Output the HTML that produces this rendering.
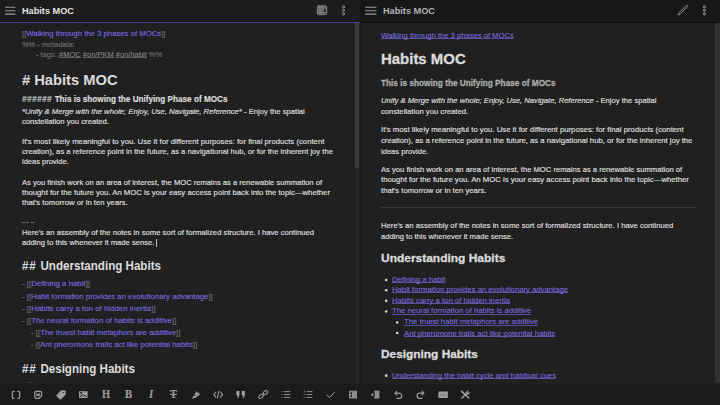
<!DOCTYPE html>
<html><head><meta charset="utf-8">
<style>
*{margin:0;padding:0;box-sizing:border-box}
html,body{width:720px;height:405px;overflow:hidden;background:#202020}
body{position:relative;font-family:"Liberation Sans",sans-serif;color:#dadada}
.pane{position:absolute;top:0;height:405px;overflow:hidden}
#lp{left:0;width:360px;background:#202020}
#rp{left:360px;width:360px;background:#202020}
.hdr{position:absolute;left:0;top:0;height:22px;background:#191919}
.ln{position:absolute;white-space:pre;line-height:0;transform-origin:0 0}
.ln span{line-height:0}
.b{font-weight:bold}
.i{font-style:italic}
.f{color:#6a6a6a}
.a{color:#7f6ce2;-webkit-text-stroke:0.1px currentColor}
.au{-webkit-text-stroke:0.05px currentColor;color:#8170e4;background:linear-gradient(#6f5fd0,#6f5fd0) 0 calc(100% - 0.9px)/100% 0.75px no-repeat}
.tg{color:#858585;-webkit-text-stroke:0.1px currentColor;background:linear-gradient(#7a7a7a,#7a7a7a) 0 calc(100% - 0.8px)/100% 0.7px no-repeat}
.m{color:#ababab}
.hh{font-style:italic;color:#b8b8b8;letter-spacing:0.45px}
.ln{-webkit-text-stroke:0.2px currentColor}
.hd{-webkit-text-stroke:0.3px currentColor}
.hw{letter-spacing:0.8px}
.ns{-webkit-text-stroke:0.05px currentColor}
.bul{position:absolute;width:2.6px;height:2.6px;border-radius:50%;background:#d8d8d8}
svg{position:absolute;overflow:visible}
#tb{position:absolute;left:0;top:384px;width:720px;height:21px;background:#1b1b1b}
</style></head><body>
<div id="lp" class="pane">
 <div class="hdr" style="width:360px;background:#1c1c1d"></div>
 <div style="position:absolute;left:0;top:20.6px;width:360px;height:1px;background:#151515"></div>
 <div style="position:absolute;left:0;top:21.6px;width:360px;height:1.2px;background:#4d409f"></div>
 <div style="position:absolute;left:355px;top:23px;width:4px;height:362px;background:#262626"></div>
 <div style="position:absolute;left:355px;top:23px;width:4px;height:145px;background:#3a3a3a"></div>
</div>
<div id="rp" class="pane">
 <div class="hdr" style="width:360px;background:#171717"></div>
 <div style="position:absolute;left:0;top:21.6px;width:360px;height:1px;background:#0f0f0f"></div>
 <div style="position:absolute;left:-1px;top:22px;width:2px;height:362px;background:#1b1b1b"></div>
 <div style="position:absolute;left:354.8px;top:22.6px;width:5.2px;height:360.6px;background:#313131;border-radius:2px 0 0 2px"></div>
</div>
<!-- header contents -->
<svg width="720" height="22" style="left:0;top:0" viewBox="0 0 720 22" fill="none" stroke-linecap="round">
 <g stroke="#9a9a9a" stroke-width="1.1">
  <path d="M5.5 7.3H15M5.5 10.7H15M5.5 14.1H15"/>
  <path d="M365.5 7.3H376M365.5 10.7H376M365.5 14.1H376"/>
 </g>
 <g stroke="#9a9a9a" stroke-width="1">
  <rect x="317.3" y="5.8" width="9.4" height="8.8" rx="1.4" fill="#5f5f5f" stroke="#8c8c8c" stroke-width="0.9"/>
  <path d="M319.1 7.8H323.6M319.1 10.2H322.6M319.1 12.6H323.6" stroke="#9a9a9a" stroke-width="0.8"/>
  <path d="M325.6 8.7L323.3 10.4L325.6 12.1Z" fill="#1a1a1a" stroke="none"/>
  <circle cx="343.5" cy="6.9" r="1.05"/><circle cx="343.5" cy="10.4" r="1.05"/><circle cx="343.5" cy="13.9" r="1.05"/>
  <circle cx="704.4" cy="6.9" r="1.05"/><circle cx="704.4" cy="10.4" r="1.05"/><circle cx="704.4" cy="13.9" r="1.05"/>
  <path d="M678.4 14.6L678.9 12.8L686.4 5.5A0.85 0.85 0 0 1 687.6 6.7L680.2 14.1Z" stroke-width="0.9" stroke-linejoin="round"/>
 </g>
</svg>
<div class="ln b" style="left:22px;top:11.2px;font-size:9.6px;color:#e2e2e2;-webkit-text-stroke:0;transform:scaleX(0.955)"><span>Habits MOC</span></div>
<div class="ln b" style="left:382.5px;top:11.2px;font-size:9.6px;color:#b3b3b3;-webkit-text-stroke:0;transform:scaleX(0.955)"><span>Habits MOC</span></div>
<!-- hr right -->
<div style="position:absolute;left:380.4px;top:207.3px;width:315.6px;height:1px;background:#363636"></div>
<div style="position:absolute;left:21.9px;top:221.7px;width:3.2px;height:1.1px;background:#727272"></div><div style="position:absolute;left:26.4px;top:221.7px;width:3px;height:1.1px;background:#727272"></div><div style="position:absolute;left:30.8px;top:221.7px;width:3.3px;height:1.1px;background:#727272"></div>
<!-- cursor -->
<div style="position:absolute;left:156.4px;top:238.6px;width:0.7px;height:8px;background:#bdbdbd"></div>
<div style="position:absolute;left:27.8px;top:382px;width:1px;height:1px;background:#555"></div><div style="position:absolute;left:31.2px;top:382px;width:1px;height:1px;background:#555"></div>
<div class="ln " style="left:22px;top:34.33px;font-size:8px;transform:scaleX(0.9681);"><span id="l1"><span class="f">[[</span><span class="a">Walking through the 3 phases of MOCs</span><span class="f">]]</span></span></div>
<div class="ln " style="left:22px;top:44.73px;font-size:8px;transform:scaleX(0.9311);"><span id="l2"><span class="f">%% - metadata:</span></span></div>
<div class="ln " style="left:35.8px;top:54.73px;font-size:8px;transform:scaleX(0.9395);"><span id="l3"><span class="f">- tags: </span><span class="tg">#MOC</span><span class="f"> </span><span class="tg">#on/PKM</span><span class="f"> </span><span class="tg">#on/habit</span><span class="f"> %%</span></span></div>
<div class="ln b ns" style="left:22px;top:79.81px;font-size:14.4px;transform:scaleX(1.0207);"><span id="l4"># Habits MOC</span></div>
<div class="ln b" style="left:22px;top:99.42px;font-size:8.3px;transform:scaleX(0.9842);"><span id="l5"><span class="hh">###### </span>This is showing the Unifying Phase of MOCs</span></div>
<div class="ln " style="left:22px;top:111.93px;font-size:8px;transform:scaleX(0.9568);"><span id="l6"><span class="i">*Unify &amp; Merge with the whole; Enjoy, Use, Navigate, Reference*</span> - Enjoy the spatial</span></div>
<div class="ln " style="left:22px;top:121.93px;font-size:8px;transform:scaleX(0.9588);"><span id="l7">constellation you created.</span></div>
<div class="ln " style="left:22px;top:142.23px;font-size:8px;transform:scaleX(0.9686);"><span id="l8">It's most likely meaningful to you. Use it for different purposes: for final products (content</span></div>
<div class="ln " style="left:22px;top:152.33px;font-size:8px;transform:scaleX(0.9593);"><span id="l9">creation), as a reference point in the future, as a navigational hub, or for the inherent joy the</span></div>
<div class="ln " style="left:22px;top:162.23px;font-size:8px;transform:scaleX(0.9375);"><span id="l10">ideas provide.</span></div>
<div class="ln " style="left:22px;top:182.73px;font-size:8px;transform:scaleX(0.9489);"><span id="l11">As you finish work on an area of interest, the MOC remains as a renewable summation of</span></div>
<div class="ln " style="left:22px;top:193.13px;font-size:8px;transform:scaleX(0.9660);"><span id="l12">thought for the future you. An MOC is your easy access point back into the topic—whether</span></div>
<div class="ln " style="left:22px;top:203.03px;font-size:8px;transform:scaleX(0.9655);"><span id="l13">that's tomorrow or in ten years.</span></div>
<div class="ln " style="left:22px;top:232.53px;font-size:8px;transform:scaleX(0.9594);"><span id="l15">Here's an assembly of the notes in some sort of formalized structure. I have continued</span></div>
<div class="ln " style="left:22px;top:242.83px;font-size:8px;transform:scaleX(0.9542);"><span id="l16">adding to this whenever it made sense.</span></div>
<div class="ln b ns" style="left:22px;top:266.24px;font-size:12px;transform:scaleX(0.9667);"><span id="l17"><span class="hw">## </span>Understanding Habits</span></div>
<div class="ln " style="left:22px;top:284.33px;font-size:8px;transform:scaleX(0.9800);"><span id="l18"><span class="f">- </span><span class="f">[[</span><span class="a">Defining a habit</span><span class="f">]]</span></span></div>
<div class="ln " style="left:22px;top:296.73px;font-size:8px;transform:scaleX(0.9701);"><span id="l19"><span class="f">- </span><span class="f">[[</span><span class="a">Habit formation provides an evolutionary advantage</span><span class="f">]]</span></span></div>
<div class="ln " style="left:22px;top:309.03px;font-size:8px;transform:scaleX(0.9850);"><span id="l20"><span class="f">- </span><span class="f">[[</span><span class="a">Habits carry a ton of hidden inertia</span><span class="f">]]</span></span></div>
<div class="ln " style="left:22px;top:321.23px;font-size:8px;transform:scaleX(0.9774);"><span id="l21"><span class="f">- </span><span class="f">[[</span><span class="a">The neural formation of habits is additive</span><span class="f">]]</span></span></div>
<div class="ln " style="left:30.6px;top:333.13px;font-size:8px;transform:scaleX(0.9766);"><span id="l22"><span class="f">- </span><span class="f">[[</span><span class="a">The truest habit metaphors are additive</span><span class="f">]]</span></span></div>
<div class="ln " style="left:30.6px;top:345.33px;font-size:8px;transform:scaleX(0.9743);"><span id="l23"><span class="f">- </span><span class="f">[[</span><span class="a">Ant pheromone trails act like potential habits</span><span class="f">]]</span></span></div>
<div class="ln b ns" style="left:22px;top:369.34px;font-size:12px;transform:scaleX(0.9641);"><span id="l24"><span class="hw">## </span>Designing Habits</span></div>
<div class="ln " style="left:381px;top:35.93px;font-size:8px;transform:scaleX(0.9524);"><span id="r1"><span class="au">Walking through the 3 phases of MOCs</span></span></div>
<div class="ln b hd" style="left:381px;top:58.70px;font-size:15px;transform:scaleX(0.9963);"><span id="r2">Habits MOC</span></div>
<div class="ln b hd" style="left:381px;top:82.58px;font-size:9px;transform:scaleX(0.9164);"><span id="r3"><span class="m">This is showing the Unifying Phase of MOCs</span></span></div>
<div class="ln " style="left:381px;top:100.53px;font-size:8px;transform:scaleX(0.9519);"><span id="r4"><span class="i">Unify &amp; Merge with the whole; Enjoy, Use, Navigate, Reference</span> - Enjoy the spatial</span></div>
<div class="ln " style="left:381px;top:111.83px;font-size:8px;transform:scaleX(0.9599);"><span id="r5">constellation you created.</span></div>
<div class="ln " style="left:381px;top:130.03px;font-size:8px;transform:scaleX(0.9692);"><span id="r6">It's most likely meaningful to you. Use it for different purposes: for final products (content</span></div>
<div class="ln " style="left:381px;top:140.93px;font-size:8px;transform:scaleX(0.9605);"><span id="r7">creation), as a reference point in the future, as a navigational hub, or for the inherent joy the</span></div>
<div class="ln " style="left:381px;top:151.63px;font-size:8px;transform:scaleX(0.9476);"><span id="r8">ideas provide.</span></div>
<div class="ln " style="left:381px;top:169.73px;font-size:8px;transform:scaleX(0.9527);"><span id="r9">As you finish work on an area of interest, the MOC remains as a renewable summation of</span></div>
<div class="ln " style="left:381px;top:180.23px;font-size:8px;transform:scaleX(0.9657);"><span id="r10">thought for the future you. An MOC is your easy access point back into the topic—whether</span></div>
<div class="ln " style="left:381px;top:191.23px;font-size:8px;transform:scaleX(0.9619);"><span id="r11">that's tomorrow or in ten years.</span></div>
<div class="ln " style="left:381px;top:226.13px;font-size:8px;transform:scaleX(0.9604);"><span id="r12">Here's an assembly of the notes in some sort of formalized structure. I have continued</span></div>
<div class="ln " style="left:381px;top:236.63px;font-size:8px;transform:scaleX(0.9528);"><span id="r13">adding to this whenever it made sense.</span></div>
<div class="ln b hd" style="left:381px;top:258.32px;font-size:11.5px;transform:scaleX(1.0403);"><span id="r14">Understanding Habits</span></div>
<div class="ln " style="left:392.0px;top:279.93px;font-size:8px;transform:scaleX(0.9587);"><span id="rb0"><span class="au">Defining a habit</span></span></div>
<div class="ln " style="left:392.0px;top:290.13px;font-size:8px;transform:scaleX(0.9629);"><span id="rb1"><span class="au">Habit formation provides an evolutionary advantage</span></span></div>
<div class="ln " style="left:392.0px;top:300.73px;font-size:8px;transform:scaleX(0.9685);"><span id="rb2"><span class="au">Habits carry a ton of hidden inertia</span></span></div>
<div class="ln " style="left:392.0px;top:311.33px;font-size:8px;transform:scaleX(0.9648);"><span id="rb3"><span class="au">The neural formation of habits is additive</span></span></div>
<div class="ln " style="left:403.6px;top:322.33px;font-size:8px;transform:scaleX(0.9634);"><span id="rb4"><span class="au">The truest habit metaphors are additive</span></span></div>
<div class="ln " style="left:403.6px;top:333.53px;font-size:8px;transform:scaleX(0.9632);"><span id="rb5"><span class="au">Ant pheromone trails act like potential habits</span></span></div>
<div class="ln b hd" style="left:381px;top:354.32px;font-size:11.5px;transform:scaleX(1.0315);"><span id="r15">Designing Habits</span></div>
<div class="ln " style="left:392px;top:375.53px;font-size:8px;transform:scaleX(0.9628);"><span id="rb6"><span class="au">Understanding the habit cycle and habitual cues</span></span></div>
<svg width="720" height="405" style="left:0;top:0"><circle cx="386.2" cy="280.05" r="1.3" fill="#d6d6d6"/><circle cx="386.2" cy="290.25" r="1.3" fill="#d6d6d6"/><circle cx="386.2" cy="300.85" r="1.3" fill="#d6d6d6"/><circle cx="386.2" cy="311.45" r="1.3" fill="#d6d6d6"/><circle cx="397.2" cy="322.45" r="1.3" fill="#d6d6d6"/><circle cx="397.2" cy="333.05" r="1.3" fill="#d6d6d6"/><circle cx="386.2" cy="375.65" r="1.3" fill="#d6d6d6"/></svg>
<div id="tb"></div>
<svg width="720" height="21" style="left:0;top:384px" viewBox="0 384 720 21" fill="none" stroke="#9d9d9d" stroke-width="1.2" stroke-linecap="round" stroke-linejoin="round">
 <!-- [ ] -->
 <path d="M14.2 391.3H13.3A0.9 0.9 0 0 0 12.4 392.2V397.4A0.9 0.9 0 0 0 13.3 398.3H14.2M17.8 391.3H18.7A0.9 0.9 0 0 1 19.6 392.2V397.4A0.9 0.9 0 0 1 18.7 398.3H17.8" stroke-width="1.3"/>
 <!-- sticker -->
 <path d="M36 391.3H40.4A1.2 1.2 0 0 1 41.6 392.5V395.8L39 398.3H36A1.2 1.2 0 0 1 34.8 397.1V392.5A1.2 1.2 0 0 1 36 391.3Z" stroke-width="1.2"/>
 <path d="M36.6 393.2V395.8H39.6V393.2L38.1 394.6Z" fill="#9d9d9d" stroke-width="0.5"/>
 <!-- tag -->
 <path d="M61.2 390.8H65.2V394.8L60.2 399.5L56.8 396Z" fill="#9d9d9d" stroke-width="0.9"/><circle cx="63.4" cy="392.6" r="0.65" fill="#1b1b1b" stroke="none"/>
 <!-- image -->
 <rect x="79" y="391.2" width="8.6" height="6.8" fill="#9d9d9d" stroke="none"/>
 <path d="M80.2 396.8L82 394.6L83.6 396.4L85 395.3L86.6 396.8" stroke="#1b1b1b" stroke-width="0.9"/><rect x="80" y="392.2" width="2.4" height="1.3" fill="#1b1b1b" stroke="none"/>
 <!-- highlighter -->
 <path d="M192.2 398.5L196.3 390.9L197.3 392.6L198.6 392.3L200.1 394.4L196.6 397.3Z" fill="#8f8f8f" stroke="none"/>
 <path d="M192.2 398.5L194.6 394.2L196.4 396.6Z" fill="#b0b0b0" stroke="none"/>
 <circle cx="194.7" cy="395.6" r="0.75" fill="#1b1b1b" stroke="none"/>
 <!-- code -->
 <path d="M215.8 392.2L213.9 394.7L215.8 397.2M220.6 392.2L222.5 394.7L220.6 397.2M218.9 391.4L217.4 398" stroke-width="1.1"/>
 <!-- quote -->
 <path d="M236.4 390.9H239.4V395.2Q239.3 397.4 237.5 398.2L237.1 397.5Q238 396.8 238 395.4H236.4Z" fill="#a6a6a6" stroke="none"/>
 <path d="M241.8 390.9H244.8V395.2Q244.7 397.4 242.9 398.2L242.5 397.5Q243.4 396.8 243.4 395.4H241.8Z" fill="#a6a6a6" stroke="none"/>
 <!-- link -->
 <ellipse cx="265.4" cy="392.6" rx="2.5" ry="1.6" transform="rotate(-40 265.4 392.6)" stroke-width="1.1"/><ellipse cx="261" cy="396.4" rx="2.5" ry="1.6" transform="rotate(-40 261 396.4)" stroke-width="1.1"/>
 <!-- bullet list -->
 <path d="M284.4 391.6H290M284.4 394.5H290M284.4 397.4H290" stroke-width="1" stroke="#8e8e8e"/>
 <circle cx="282" cy="391.6" r="0.55" fill="#8a8a8a" stroke="none"/><circle cx="282" cy="394.5" r="0.55" fill="#8a8a8a" stroke="none"/><circle cx="282" cy="397.4" r="0.55" fill="#8a8a8a" stroke="none"/>
 <!-- numbered -->
 <path d="M307 391.6H312M307 394.5H312M307 397.4H312" stroke-width="1" stroke="#8e8e8e"/>
 <path d="M304.6 390.8V392.4M304.1 394.5H305.1M304.1 397.4H305.1" stroke-width="0.7" stroke="#8a8a8a"/>
 <!-- check -->
 <path d="M326.8 395L329.4 397.5L334.6 392.2" stroke-width="1"/>
 <!-- indent -->
 <rect x="349" y="390.7" width="8" height="7.8" fill="#8d8d8d" stroke="none"/>
 <rect x="350.2" y="392.3" width="1.8" height="4.6" fill="#1b1b1b" stroke="none"/>
 <path d="M350 393.4L351.7 394.6L350 395.8Z" fill="#b5b5b5" stroke="none"/>
 <!-- outdent -->
 <rect x="374" y="390.7" width="5.4" height="7.8" fill="#8d8d8d" stroke="none"/>
 <rect x="373.2" y="392.3" width="1.5" height="4.6" fill="#1b1b1b" stroke="none"/>
 <path d="M373.3 393.1L370.8 394.7L373.3 396.3Z" fill="#b0b0b0" stroke="none"/>
 <!-- undo -->
 <path d="M396.6 391.3L394.9 393.1L396.8 394.9M395.2 393.1H399.2A2.6 2.6 0 0 1 399.2 398.3H396.8"/>
 <!-- redo -->
 <path d="M422.2 391.3L423.9 393.1L422 394.9M423.6 393.1H419.6A2.6 2.6 0 0 0 419.6 398.3H422"/>
 <!-- keyboard -->
 <rect x="438.4" y="391.5" width="9.4" height="6.5" rx="0.6" fill="#a0a0a0" stroke="none"/>
 <rect x="440.6" y="393.7" width="5" height="2" rx="0.8" fill="none" stroke="#7a7a7a" stroke-width="0.6"/>
 <!-- tools -->
 <path d="M462 398L466.6 393.3" stroke-width="1.7"/>
 <path d="M466.2 393.6A2 2 0 0 1 468.2 390.9L467.4 392.4L468.1 393.1L469.6 392.3A2 2 0 0 1 466.8 394.2Z" fill="#9d9d9d" stroke-width="0.6"/>
 <path d="M462.2 391.8L468.8 398" stroke-width="1.6"/>
 <path d="M461.4 390.9L462.8 391.3L462.4 392.6Z" fill="#9d9d9d" stroke-width="0.6"/>
</svg>
<div class="ln b" style="left:101.8px;top:394.3px;font-size:11.8px;transform:scaleX(0.88);font-family:'Liberation Serif',serif;color:#9d9d9d;line-height:0"><span>H</span></div>
<div class="ln b" style="left:125px;top:394.3px;font-size:11.8px;transform:scaleX(0.9);font-family:'Liberation Serif',serif;color:#9d9d9d"><span>B</span></div>
<div class="ln b i" style="left:148.5px;top:394.3px;font-size:11.8px;transform:scaleX(0.9);font-family:'Liberation Serif',serif;color:#9d9d9d"><span>I</span></div>
<div class="ln b" style="left:169.9px;top:394.3px;font-size:11.8px;transform:scaleX(0.88);font-family:'Liberation Serif',serif;color:#9d9d9d;text-decoration:line-through"><span>T</span></div>
</body></html>
